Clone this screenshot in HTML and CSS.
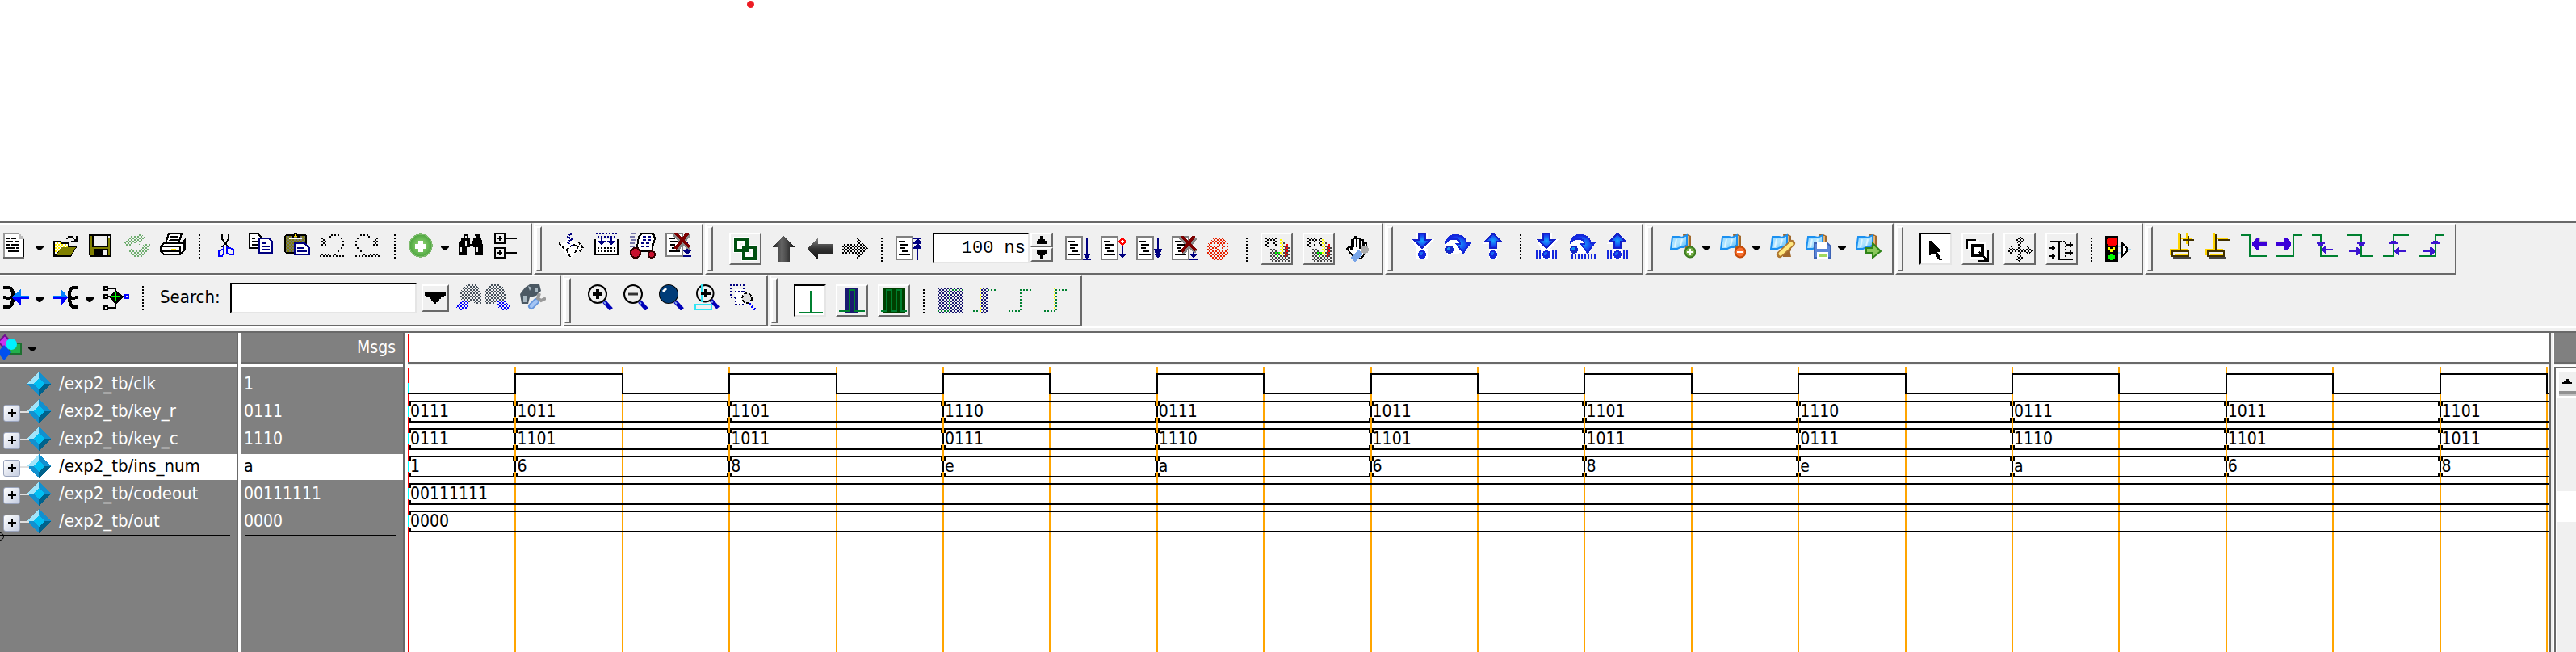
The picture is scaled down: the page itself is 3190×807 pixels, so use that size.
FILE: index.html
```html
<!DOCTYPE html>
<html lang="en">
<head>
<meta charset="utf-8">
<title>Wave</title>
<link rel="stylesheet" href="styles.css">
</head>
<body>
<svg class="defs" aria-hidden="true">
  <defs>
    <pattern id="ck" width="2" height="2" patternUnits="userSpaceOnUse"><path d="M0 0h1v1H0zM1 1h1v1H1z"/></pattern>
    <pattern id="cg" width="2" height="2" patternUnits="userSpaceOnUse"><path fill="#444" d="M0 0h1v1H0zM1 1h1v1H1z"/></pattern>
    <pattern id="cn" width="2" height="2" patternUnits="userSpaceOnUse"><path fill="#191970" d="M0 0h1v1H0zM1 1h1v1H1z"/></pattern>
    <pattern id="cb" width="2" height="2" patternUnits="userSpaceOnUse"><path fill="#00f" d="M0 0h1v1H0zM1 1h1v1H1z"/></pattern>
    <pattern id="cr" width="2" height="2" patternUnits="userSpaceOnUse"><path fill="#e62200" d="M0 0h1v1H0zM1 1h1v1H1z"/></pattern>
    <pattern id="cy" width="2" height="2" patternUnits="userSpaceOnUse"><path fill="#fff" d="M0 0h2v2H0z"/><path fill="#ffef00" d="M0 0h1v1H0zM1 1h1v1H1z"/></pattern>
    <pattern id="co" width="2" height="2" patternUnits="userSpaceOnUse"><path fill="#808000" d="M0 0h2v2H0z"/><path fill="#777" d="M0 0h1v1H0zM1 1h1v1H1z"/></pattern>
    <pattern id="cl" width="2" height="2" patternUnits="userSpaceOnUse"><path fill="#6fae6f" d="M0 0h1v1H0zM1 1h1v1H1z"/></pattern>
    <pattern id="cs" width="2" height="2" patternUnits="userSpaceOnUse"><path fill="#45505a" d="M0 0h1v1H0zM1 1h1v1H1z"/></pattern>
    <radialGradient id="gb"><stop offset="0" stop-color="#18a8ff"/><stop offset="1" stop-color="#1420e8"/></radialGradient>
    <linearGradient id="gd" x2="1"><stop offset="0" stop-color="#222"/><stop offset=".4" stop-color="#666"/><stop offset="1" stop-color="#111"/></linearGradient>
    <linearGradient id="gv" x2="0" y2="1"><stop offset="0" stop-color="#888"/><stop offset=".5" stop-color="#333"/><stop offset="1" stop-color="#111"/></linearGradient>
    <radialGradient id="gg"><stop offset="0" stop-color="#9bdc7c"/><stop offset="1" stop-color="#4da63f"/></radialGradient>
    <linearGradient id="gm" x2="1" y2="1"><stop offset="0" stop-color="#8fd4ff"/><stop offset=".5" stop-color="#b4e6ff"/><stop offset="1" stop-color="#4db4fa"/></linearGradient>
    <symbol id="sheet" viewBox="0 0 16 16"><path fill="#808080" d="M0 0h11v15H0z"/><path fill="#fff" d="M1 1h9v13H1z"/><path d="M2 3h4v1H2zM3 5h5v1H3zM3 7h3v1H3zM4 9h4v1H4zM2 11h7v1H2z"/></symbol>
    <symbol id="cross" viewBox="0 0 16 16"><path fill="none" stroke="#888" stroke-width="2" d="M5 1l10 9M15 1L7 11"/><path fill="none" stroke="#7d0000" stroke-width="2" d="M6 0l9 9M14 0L6 10"/></symbol>
    <symbol id="bdown" viewBox="0 0 16 16"><path fill="#fff" d="M4 0h7v4h4l-5 6h1v6H4v-6L1 4h3z"/><path fill="url(#gb)" stroke="#1420c8" d="M5.500.5h4v4h3L7.500 9.500 2.500 4.500h3z"/><circle cx="7.500" cy="13.500" r="2.500" fill="#1428dc"/><circle cx="7" cy="13" r="1" fill="#1868f0"/></symbol>
    <symbol id="bup" viewBox="0 0 16 16"><path fill="#fff" d="M7 0l6 6h-3v10H5V7H1z"/><path fill="url(#gb)" stroke="#1420c8" d="M7.500.5l5 5h-3v4h-4v-4h-3z"/><circle cx="7.500" cy="13.500" r="2.500" fill="#1428dc"/><circle cx="7" cy="13" r="1" fill="#1868f0"/></symbol>
    <symbol id="bover" viewBox="0 0 16 16"><path fill="#fff" d="M0 6l6-3 4 5 3 4-6 1-6 1z"/><path fill="url(#gb)" stroke="#1428d8" d="M.5 5.500Q2 1.500 6 1.500q6 0 7 5h2l-4 6-4-5.500h2Q9 4 6 4 2.500 3.500.5 6z"/><circle cx="2.500" cy="10.500" r="2.500" fill="#1428c8"/><circle cx="2" cy="10" r="1" fill="#1890f0"/></symbol>
    <symbol id="map" viewBox="0 0 16 16"><path fill="#a0682c" d="M8 1h3l2 1v9l-3 3z"/><path fill="#e2b476" d="M11 2h1v8h-1z"/><path fill="url(#gm)" stroke="#1b90f0" d="M1.500 2.500h4l2 .5 3-1.500v6l-2 1.500h-2l-2 1h-4z"/><path fill="none" stroke="#def4ff" d="M4 4L3 9M7.500 4l-1 4"/></symbol>
    <symbol id="lens" viewBox="0 0 16 16"><circle cx="6" cy="6" r="5.500" fill="#eee" stroke="#000"/><path stroke="#0000b8" stroke-width="2.500" d="M10 10.500l4.500 5"/><path stroke="#8ae" d="M10 11l1 1"/></symbol>
    <symbol id="gem" viewBox="0 0 30 30"><path fill="#1290cf" d="M15 0l15 15-15 15L0 15z"/><path fill="#a0e4fa" d="M15 0v8l-7 7H0z"/><path fill="#00628c" d="M30 15H22l-7 8v7z"/><path fill="#00bff3" d="M15 8l7 7-7 7-7-7z"/></symbol>
  </defs>
</svg>

<div class="canvas"><div class="dot"></div></div>

<header class="toolbars">
  <div class="strip">
    <div class="bar bar-first" role="toolbar" aria-label="Standard">
      <button class="tool" aria-label="New"><svg viewBox="0 0 16 16"><path fill="#999" d="M0 0h10v1H1v14H0z"/><path fill="#fff" d="M1 1h9v3h2v11H1z"/><path fill="#bbb" d="M10 1h1v1h1v1h1v1h-3z"/><path d="M12 4h1v11h-1zM2 3h2v1H2zM5 3h3v1H5zM2 5h4v1H2zM7 5h3v1H7zM2 7h2v1H2zM5 7h5v1H5zM2 9h5v1H2zM8 9h2v1H8zM3 11h7v1H3z"/><path fill="#666" d="M0 15h13v1H0z"/></svg></button>
      <button class="drop" aria-label="New options"></button>
      <button class="tool" aria-label="Open"><svg viewBox="0 0 16 16"><path d="M0 5h5v1h5v2h5l-4 7H0z"/><path fill="url(#cy)" d="M1 6h3l1 1h4v2H5l-3 4H1z"/><path fill="#808000" d="M5 9h9l-3 5H2z"/><path d="M8 3h1V2h3v1h1v1h1V2h1v4h-4V5h2V4h-1V3H9v1H8z"/></svg></button>
      <button class="tool" aria-label="Save"><svg viewBox="0 0 16 16"><path d="M0 1h14v14H1l-1-1z"/><path fill="#808000" d="M1 2h1v7h10V3h1v11H1z"/><path fill="#f0f0f0" d="M3 2h8v6H3zM12 2h1v1h-1z"/><path d="M3 10h9v4H3z"/><path fill="#f0f0f0" d="M9 11h2v3H9z"/></svg></button>
      <button class="tool" aria-label="Reload" disabled><svg viewBox="0 0 16 16"><path fill="url(#cl)" d="M0 6l4-4h5V0l4 3-4 5V6L5 7 2 9zM3 10l5 1 3-1 1-3h4l-1 4-4 4H7v1l-4-4z"/></svg></button>
      <button class="tool" aria-label="Print"><svg viewBox="0 0 16 16"><path fill="#fff" stroke="#000" d="M5.500.5h8l-2 6h-8z"/><path d="M6 2h5v1H6zM6 4h5v1H5z"/><path fill="#fff" stroke="#000" d="M2.500 6.500h11l2-2v6l-3 3h-10l-2-2v-3z"/><path d="M1 8h12v1H1zM12 9h1v4h-1zM14 5h1v6h-1zM1 11h11v1H1z"/><path fill="#ffe000" d="M7 10h3v1H7z"/></svg></button>
      <span class="sep"></span>
      <button class="tool" aria-label="Cut"><svg viewBox="0 0 16 16"><path fill="none" stroke="#000" d="M5.500 1v3l4 5M9.500 1v3l-4 5"/><path fill="none" stroke="#00f" d="M6.500 8.500v4l-1 2h-2v-3l2-1h1M8.500 8.500v4l2 1h2v-3l-2-1h-2"/></svg></button>
      <button class="tool" aria-label="Copy"><svg viewBox="0 0 16 16"><path fill="#fff" stroke="#000" d="M.5.5h5l2 2v7h-7z"/><path d="M2 3h2v1H2zM2 5h4v1H2zM2 7h4v1H2z"/><path fill="#fff" stroke="#000080" d="M6.500 3.500h6l2 2v7h-8z"/><path fill="#000080" d="M8 6h3v1H8zM8 8h5v1H8zM8 10h5v1H8z"/></svg></button>
      <button class="tool" aria-label="Paste"><svg viewBox="0 0 16 16"><path d="M1 1h12l1 1v10l-1 1H1l-1-1V2z"/><path fill="url(#co)" d="M1 2h12v10H1z"/><path fill="#fff" d="M3 3h8v1H3z"/><path fill="#ffe000" stroke="#000" d="M4.500 2.500h1l1-2h1l1 2h1"/><path fill="#fff" stroke="#000080" d="M6.500 6.500h6l3 3v4h-9z"/><path fill="#000080" d="M8 9h4v1H8zM8 11h6v1H8z"/></svg></button>
      <button class="tool" aria-label="Undo" disabled><svg viewBox="0 0 16 16"><path d="M1 3h1v1H1zM2 4h1v1H2zM1 5h1v1H1zM3 5h1v1H3zM2 6h1v1H2zM1 7h1v1H1zM3 7h1v1H3zM6 2h1v1H6zM7 1h1v1H7zM9 1h1v1H9zM11 1h1v1h-1zM13 3h1v1h-1zM14 5h1v1h-1zM14 7h1v1h-1zM13 9h1v1h-1zM11 11h1v1h-1zM0 14h1v1H0zM1 13h1v1H1zM2 14h1v1H2zM3 13h1v1H3zM4 14h1v1H4zM5 13h1v1H5zM6 14h1v1H6zM8 14h1v1H8zM9 13h1v1H9zM10 14h1v1h-1zM12 14h1v1h-1zM14 14h1v1h-1z"/></svg></button>
      <button class="tool" aria-label="Redo" disabled><svg viewBox="0 0 16 16"><path transform="matrix(-1 0 0 1 15 0)" d="M1 3h1v1H1zM2 4h1v1H2zM1 5h1v1H1zM3 5h1v1H3zM2 6h1v1H2zM1 7h1v1H1zM3 7h1v1H3zM6 2h1v1H6zM7 1h1v1H7zM9 1h1v1H9zM11 1h1v1h-1zM13 3h1v1h-1zM14 5h1v1h-1zM14 7h1v1h-1zM13 9h1v1h-1zM11 11h1v1h-1zM0 14h1v1H0zM1 13h1v1H1zM2 14h1v1H2zM3 13h1v1H3zM4 14h1v1H4zM5 13h1v1H5zM6 14h1v1H6zM8 14h1v1H8zM9 13h1v1H9zM10 14h1v1h-1zM12 14h1v1h-1zM14 14h1v1h-1z"/></svg></button>
      <span class="sep"></span>
      <button class="tool" aria-label="Add"><svg viewBox="0 0 16 16"><circle cx="7.500" cy="8" r="7" fill="url(#gg)" stroke="#7cba6c" stroke-width=".7"/><path fill="#fff" d="M6 5h3v2h2v3H9v2H6v-2H4V7h2z"/></svg></button>
      <button class="drop" aria-label="Add options"></button>
      <button class="tool" aria-label="Find"><svg viewBox="0 0 16 16"><path d="M3 1h3v2h1v2h2V3h1V1h3v2h1l1 5v6h-5V9H9V8H7v1H5v5H0V8l2-5h1z"/><path fill="#eee" d="M4 2h1v1H4zM10 2h1v1h-1zM1 9h1v3H1zM4 5h1v3H4zM7 5h1v2H7zM11 9h1v3h-1z"/></svg></button>
      <button class="tool" aria-label="Collapse tree"><svg viewBox="0 0 16 16"><path fill="none" stroke="#000" d="M.5.5h6v6h-6zM.5 9.500h6v6h-6zM2 3.500h3M3.500 2v3M2 12.500h3M3.500 11v3M7 3.500h7M7 12.500h7"/></svg></button>
    </div>
    <div class="bar" role="toolbar" aria-label="Compile">
      <span class="grip"></span>
      <button class="tool" aria-label="Compile"><svg viewBox="0 0 16 16"><path fill="#fff" d="M7 3l8 6-8 7-7-8z"/><path fill="none" stroke="#000" stroke-dasharray="2 1" d="M0 6.500l3 3 2 1 2-2M5 11l2 4M9 7.500l3 1-2 4M12 5.500l3 4-3 3"/><path fill="none" stroke="#000080" d="M8 .5L5.500 2.500 8 4 5.500 6 9 8.500" stroke-dasharray="2 1"/></svg></button>
      <button class="tool" aria-label="Compile all"><svg viewBox="0 0 16 16"><path fill="#fff" stroke="#000" d="M.5 4v9.500h14V4"/><path stroke="#000" stroke-dasharray="1 1" d="M2 9.500h12M2 11.500h12"/><path fill="#000080" d="M2 5h5L4.500 8zM8 5h5l-2.500 3zM4 3h1v3H4zM10 3h1v3h-1z"/><path fill="none" stroke="#000080" stroke-dasharray="1 1" d="M1 .5h13M2 2.500h12"/></svg></button>
      <button class="tool" aria-label="Simulate"><svg viewBox="0 0 16 16"><path fill="#fff" stroke="#000" d="M7.500.5h7l1 3-2 8h-8l-1-3 1-6z"/><path stroke="#000080" stroke-dasharray="2 1" d="M8 2.500h5M8 4.500h5M7 6.500h5M7 8.500h5"/><path stroke="#77a" stroke-dasharray="3 1" d="M1 .5h4M0 2.500h4M1 4.500h3M0 6.500h4M0 8.500h3"/><circle cx="3.500" cy="12.500" r="3" fill="#c8102e" stroke="#300"/><circle cx="13.500" cy="13.500" r="2" fill="#c8102e" stroke="#300"/></svg></button>
      <button class="tool" aria-label="End simulation"><svg viewBox="0 0 16 16"><use href="#sheet" width="16" height="16"/><path fill="#000080" d="M13 6h1v5h2l-2.500 3L11 11h2zM11 14h5v1h-5z"/><use href="#cross" width="16" height="16"/></svg></button>
    </div>
    <div class="bar bar-framed bar-run" role="toolbar" aria-label="Simulate">
      <span class="grip"></span>
      <button class="framed" aria-label="Environment"><svg viewBox="0 0 16 16"><path fill="none" stroke="#fff" stroke-width="4" d="M2.500 2.500h6v6h-6zM7.500 7.500h6v6h-6z"/><path fill="none" stroke="#004f10" stroke-width="2" d="M2 2h7v7H2zM7 7h7v7H7z"/></svg></button>
      <button class="tool" aria-label="Up"><svg viewBox="0 0 16 16"><path fill="url(#gd)" d="M7.500 0L15 7h-3.500v9h-7V7H1z"/></svg></button>
      <button class="tool" aria-label="Back"><svg viewBox="0 0 16 16"><path fill="url(#gv)" d="M0 8l7-7v4h9v6H7v4z"/></svg></button>
      <button class="tool" aria-label="Forward" disabled><svg viewBox="0 0 16 16"><path fill="url(#ck)" d="M16 8L9 1v4H0v6h9v4z"/></svg></button>
      <span class="sep"></span>
      <button class="tool" aria-label="Restart"><svg viewBox="0 0 16 16"><use href="#sheet" width="16" height="16"/><path fill="#000080" d="M11 1h5v1h-2l2 2v1h-2l2 2v1h-2v7h-1V8h-2V7l2-2h-2V4l2-2h-2z"/></svg></button>
      <input class="runtime" type="text" value="100 ns" aria-label="Run length">
      <span class="spinner"><button aria-label="Increase"><svg viewBox="0 0 6 5"><path d="M2 0h2v2h1v1h1v2H0V3h1V2h1z"/></svg></button><button aria-label="Decrease"><svg viewBox="0 0 6 5"><path d="M0 0h6v2H5v1H4v2H2V3H1V2H0z"/></svg></button></span>
      <button class="tool run" aria-label="Run"><svg viewBox="0 0 16 16"><use href="#sheet" width="16" height="16"/><path fill="#000080" d="M13 1h1v10h2l-2 3h2v1h-5v-1h2l-2-3h2z"/></svg></button>
      <button class="tool" aria-label="Continue run"><svg viewBox="0 0 16 16"><use href="#sheet" width="16" height="16"/><path fill="#fff" stroke="#f00" d="M13.500 1.500l2 2-2 2-2-2z"/><path fill="#000080" d="M13 6h1v5h2l-2.500 3L11 11h2z"/></svg></button>
      <button class="tool" aria-label="Run all"><svg viewBox="0 0 16 16"><use href="#sheet" width="16" height="16"/><path fill="#000080" d="M13 1h1v7h2l-1 3h1l-2.500 3L11 11h1l-1-3h2z"/></svg></button>
      <button class="tool" aria-label="Break"><svg viewBox="0 0 16 16"><use href="#sheet" width="16" height="16"/><path fill="#000080" d="M13 6h1v5h2l-2.500 3L11 11h2zM11 14h5v1h-5z"/><use href="#cross" width="16" height="16"/></svg></button>
      <button class="tool" aria-label="Stop" disabled><svg viewBox="0 0 16 16"><path fill="url(#cr)" d="M4 1h5l4 4v6l-4 4H4l-4-4V5z"/><path fill="#f0f0f0" d="M3 5h3v1H3zM7 6h2v2h2V5h1v4H7zM3 8h3v1H3z"/></svg></button>
      <span class="sep"></span>
      <button class="framed" aria-label="Performance profile" disabled><svg viewBox="0 0 16 16"><path fill="url(#ck)" d="M1 1h7v5H6V3H3v4H1z"/><path fill="url(#cg)" d="M4 8h4v2h3V3h2v3h3v10H4z"/><path stroke="#ff0" stroke-dasharray="1 1" d="M11.500 3v10M10.500 2v10"/><path stroke="#f00" stroke-dasharray="1 1" d="M14.500 5v8M13.500 6v8"/><path stroke="#0f0" stroke-dasharray="1 1" d="M7 10.500h3M8 12.500h2"/></svg></button>
      <button class="framed" aria-label="Memory profile" disabled><svg viewBox="0 0 16 16"><path fill="url(#ck)" d="M1 1h4l2 1 3-1v5H8V3H6v3H5V3H3v4H1z"/><path fill="url(#cg)" d="M4 8h4v2h3V3h2v3h3v10H4z"/><path stroke="#ff0" stroke-dasharray="1 1" d="M11.500 3v10M10.500 2v10"/><path stroke="#f00" stroke-dasharray="1 1" d="M14.500 5v8M13.500 6v8"/><path stroke="#0f0" stroke-dasharray="1 1" d="M7 10.500h3M8 12.500h2"/></svg></button>
      <button class="tool" aria-label="Edit profile"><svg viewBox="0 0 16 16"><path fill="#fff" stroke="#000" d="M4.500 8V2.500h1V7V1.500h1V.5h1V7 1.500h2V8 2.500h2V7l1-3h1v5l-3 5h-4l-5-6 1-1h1l1 2z"/><path stroke="#79a5e8" stroke-width="4" d="M5 15l5-5"/><circle cx="12.500" cy="8.500" r="2.500" fill="#aaa"/></svg></button>
    </div>
    <div class="bar" role="toolbar" aria-label="Step">
      <span class="grip"></span>
      <button class="tool" aria-label="Step into"><svg viewBox="0 0 16 16"><use href="#bdown" width="16" height="16"/></svg></button>
      <button class="tool" aria-label="Step over"><svg viewBox="0 0 16 16"><use href="#bover" width="16" height="16"/></svg></button>
      <button class="tool" aria-label="Step out"><svg viewBox="0 0 16 16"><use href="#bup" width="16" height="16"/></svg></button>
      <span class="sep"></span>
      <button class="tool" aria-label="Step into current"><svg viewBox="0 0 16 16"><use href="#bdown" width="16" height="16"/><path fill="#1428dc" d="M1 11h1v5H1zM3 11h1v5H3zM11 11h1v5h-1zM13 11h1v5h-1z"/></svg></button>
      <button class="tool" aria-label="Step over current"><svg viewBox="0 0 16 16"><use href="#bover" width="16" height="16"/><path stroke="#1428dc" stroke-width="3" stroke-dasharray="1 1" d="M1 14.500h15"/></svg></button>
      <button class="tool" aria-label="Step out current"><svg viewBox="0 0 16 16"><use href="#bup" width="16" height="16"/><path fill="#1428dc" d="M1 11h1v5H1zM3 11h1v5H3zM11 11h1v5h-1zM13 11h1v5h-1z"/></svg></button>
    </div>
    <div class="bar" role="toolbar" aria-label="Bookmarks">
      <span class="grip"></span>
      <button class="tool smooth" aria-label="Add bookmark"><svg viewBox="0 0 16 16"><use href="#map" width="16" height="16"/><circle cx="12.500" cy="12" r="3.200" fill="#78b048" stroke="#3c7c20"/><path stroke="#fff" d="M10.500 12h4M12.500 10v4"/></svg></button>
      <button class="drop" aria-label="Add bookmark options"></button>
      <button class="tool smooth" aria-label="Delete bookmark"><svg viewBox="0 0 16 16"><use href="#map" width="16" height="16"/><circle cx="12.500" cy="12" r="3.200" fill="#fb7030" stroke="#c44a08"/><path stroke="#fff" d="M10.500 12h4"/></svg></button>
      <button class="drop" aria-label="Delete bookmark options"></button>
      <button class="tool smooth" aria-label="Edit bookmark"><svg viewBox="0 0 16 16"><use href="#map" width="16" height="16"/><path fill="#a0682c" d="M8 13l4-3 1 5H8z"/><path stroke="#b07830" stroke-width="4" stroke-linecap="round" d="M6 13.500l7.500-7"/><path stroke="#ffe880" stroke-width="2.500" stroke-linecap="round" d="M6.500 13l6.500-6"/></svg></button>
      <button class="tool smooth" aria-label="Save bookmark"><svg viewBox="0 0 16 16"><use href="#map" width="16" height="16"/><path fill="#5b86d8" stroke="#3c62b4" d="M5.500 6.500h8l2 2v7h-10z"/><path fill="#fff" d="M7 6h6v4H7zM7 12h7v4H7z"/><path fill="#a0d860" d="M8 13h5v2H8z"/></svg></button>
      <button class="drop" aria-label="Save bookmark options"></button>
      <button class="tool smooth" aria-label="Go to bookmark"><svg viewBox="0 0 16 16"><use href="#map" width="16" height="16"/><path fill="#8ac85c" stroke="#2f8418" d="M6.500 9.500h4v-3l5 5-5 4v-3h-4z"/></svg></button>
    </div>
    <div class="bar bar-framed" role="toolbar" aria-label="Mode">
      <span class="grip"></span>
      <button class="framed pressed" aria-label="Select mode"><svg viewBox="0 0 16 16"><path d="M4 3h1l6 6v1H9l3 5h-2L7.500 11 4 12z"/></svg></button>
      <button class="framed" aria-label="Zoom mode"><svg viewBox="0 0 16 16"><path fill="none" stroke="#fff" stroke-width="2" d="M2.500 9V3.500H9"/><path fill="none" stroke="#000" d="M1.500 8V2.500H7"/><path fill="#fff" d="M3 4h10v10H3z"/><path fill="none" stroke="#000" stroke-width="2" d="M5 6h6v6H5z"/><path fill="none" stroke="#000" d="M9 10l5 5M8 15.500h6.500V9M12 14.500h2V12"/></svg></button>
      <button class="framed" aria-label="Pan mode"><svg viewBox="0 0 16 16"><path fill="url(#ck)" d="M8 0l3 3-2 2v3h3l1-2 3 3-3 3-1-2H9v2l2 2-3 2-3-2 2-2v-2H4l-1 2-3-3 3-3 1 2h3V5L5 3z"/></svg></button>
      <button class="framed" aria-label="Edit mode"><svg viewBox="0 0 16 16"><path fill="none" stroke="#000" d="M1 3.500h5.500v11H15M0 7.500h4M2.500 6v3M0 12.500h4M2.500 11v3M11 5.500h4M13.500 4v3M11 10.500h4M13.500 9v3"/><path fill="none" stroke="#000" stroke-dasharray="1 1" d="M7 3.500h3.500v11"/></svg></button>
      <span class="sep"></span>
      <button class="tool" aria-label="Stop drawing"><svg viewBox="0 0 16 16"><path d="M0 0h8v16H0z"/><path fill="red" d="M2 1h4l1 1v3L6 6H2L1 5V2z"/><path fill="#ff0" d="M2 7h1v1h2V7h1v2H5v1H3V9H2z"/><path fill="#0f0" d="M3 11h2v1h1v2H5v1H3v-1H2v-2h1z"/><path stroke="#9cd4ee" d="M8 6.500h3M8 10.500h3M14 8.500h2"/><path fill="#fff" stroke="#000" d="M10.500 4.500l3 3v2l-3 3z"/></svg></button>
    </div>
    <div class="bar" role="toolbar" aria-label="Cursor">
      <span class="grip"></span>
      <button class="tool" aria-label="Insert cursor"><svg viewBox="0 0 16 16"><path fill="#ffd400" d="M5 0h1v10H5zM0 10h11v1H0zM0 10h1v4H0zM7 3h7v1H7zM10 0h1v7h-1z"/><path fill="#403000" d="M6 1h1v10H6zM1 11h11v4H1zM8 4h7v1H8zM11 2h1v6h-1z"/><path fill="#f0f0f0" d="M2 12h9v2H2z"/><path fill="#ffd400" d="M3 13h8v1H3z"/><path fill="#444" d="M2 15h11v1H2z"/></svg></button>
      <button class="tool" aria-label="Delete cursor"><svg viewBox="0 0 16 16"><path fill="#ffd400" d="M5 0h1v10H5zM0 10h11v1H0zM0 10h1v4H0zM7 3h7v1H7z"/><path fill="#403000" d="M6 1h1v10H6zM1 11h11v4H1zM8 4h7v1H8z"/><path fill="#f0f0f0" d="M2 12h9v2H2z"/><path fill="#ffd400" d="M3 13h8v1H3z"/><path fill="#444" d="M2 15h11v1H2z"/></svg></button>
      <button class="tool" aria-label="Previous transition"><svg viewBox="0 0 16 16"><path fill="none" stroke="#008030" d="M0 1.500h5.500v13H16"/><path fill="#bbb" d="M9 3h3v2h4v1H9z"/><path fill="#3c00d8" d="M10 3h1v3h5v2h-5v3h-1l-3-3V6z"/></svg></button>
      <button class="tool" aria-label="Next transition"><svg viewBox="0 0 16 16"><path fill="none" stroke="#008030" d="M16 1.500h-5.500v13H0"/><path fill="#3c00d8" d="M6 3H5v3H0v2h5v3h1l3-3V6z"/></svg></button>
      <button class="tool" aria-label="Previous falling edge"><svg viewBox="0 0 16 16"><path fill="none" stroke="#008030" d="M0 1.500h5.500v13H16"/><path fill="#3c14d0" d="M3 6h5v1H7v1H4V7H3zM6 10l2-2h1v2h4v1H9v2H8l-2-2z"/></svg></button>
      <button class="tool" aria-label="Next falling edge"><svg viewBox="0 0 16 16"><path fill="none" stroke="#008030" d="M0 1.500h8.500v13H16"/><path fill="#3c14d0" d="M6 6h5v1h-1v1H7V7H6zM8 11L6 9H5v2H1v1h4v2h1l2-2z"/></svg></button>
      <button class="tool" aria-label="Previous rising edge"><svg viewBox="0 0 16 16"><path fill="none" stroke="#008030" d="M16 1.500H6.500v13H0"/><path fill="#3c14d0" d="M4 7V6h1V5h3v1h1v1zM7 11l2-2h1v2h4v1h-4v2H9l-2-2z"/></svg></button>
      <button class="tool" aria-label="Next rising edge"><svg viewBox="0 0 16 16"><path fill="none" stroke="#008030" d="M16 1.500h-5.500v13H0"/><path fill="#3c14d0" d="M8 7V6h1V5h3v1h1v1zM10 11L8 9H7v2H3v1h4v2h1l2-2z"/></svg></button>
    </div>
  </div>
  <div class="strip">
    <div class="bar bar-first bar-search" role="toolbar" aria-label="Search">
      <button class="tool" aria-label="Drivers"><svg viewBox="0 0 16 16"><path fill="none" stroke="#000" stroke-width="2" d="M0 2h3q3 0 3 4v1q0 2-6 1M6 8q0 6-3 6H0"/><path fill="#0080ff" d="M5 8l6-5v4h5v1z"/><path fill="#00f" d="M5 8h11v1h-5v4z"/></svg></button>
      <button class="drop" aria-label="Driver options"></button>
      <button class="tool" aria-label="Readers"><svg viewBox="0 0 16 16"><path fill="none" stroke="#000" stroke-width="2" d="M15 2h-2q-3 0-3 4v1q0 2 5 1M10 8q0 6 3 6h2"/><path fill="#0080ff" d="M9 8L5 3v4H0v1z"/><path fill="#00f" d="M9 8H0v1h5v4z"/></svg></button>
      <button class="drop" aria-label="Reader options"></button>
      <button class="tool" aria-label="Trace"><svg viewBox="0 0 16 16"><path fill="none" stroke="#000" d="M.5 1.500h2v2h-2zM.5 6.500h2v2h-2zM.5 13.500h2v2h-2zM3 2.500h4.500v12H3M3 7.500h10"/><path d="M7 4h1l4 3v1l-4 4H7L4 8V7z"/><path fill="#0f0" d="M7 5h1v2h2v1H8v2H7V8H5V7h2z"/><path fill="none" stroke="#00f" d="M13.500 6.500h2v2h-2z"/></svg></button>
      <span class="sep"></span>
      <label class="caption" for="find">Search:</label>
      <input class="find" id="find" type="text">
      <button class="combo" aria-label="Search history"><svg viewBox="0 0 13 7"><path d="M0 0h13v2h-1v1h-2v1H9v1H8v1H7v1H6V6H5V5H4V4H3V3H1V2H0z"/></svg></button>
      <button class="tool" aria-label="Find previous" disabled><svg viewBox="0 0 16 16"><path fill="url(#cs)" d="M3 4l4-4h5l2 2 2 4v6h-4l-1-2H9v2H6L3 9z"/><path fill="url(#cb)" d="M0 14l4-4h4v4l-3 2H2z"/></svg></button>
      <button class="tool find-next" aria-label="Find next" disabled><svg viewBox="0 0 16 16"><path fill="url(#cs)" d="M0 4l4-4h5l2 1 2 5v5h-3l-2-1-2 2H0z"/><path fill="url(#cb)" d="M8 10h4l4 4-2 2h-3l-3-2z"/></svg></button>
      <button class="tool smooth" aria-label="Search options"><svg viewBox="0 0 16 16"><path fill="#4b5863" d="M0 6l3-4 3-2h6l1 4-3 3-4 1-1 4H1z"/><path fill="#a9b8c2" d="M2 7h2v4H2zM5 1l2 1-1 2zM9 2h2v3H9z"/><path stroke="#6897dc" stroke-width="4" stroke-linecap="round" d="M7 13.500l3-3"/><path stroke="#a5c5f4" stroke-width="2" stroke-linecap="round" d="M7 13.500l3-3"/><path fill="none" stroke="#999" stroke-width="2" d="M12 5.500l-1 3 2 1.500 3-1.500"/></svg></button>
    </div>
    <div class="bar" role="toolbar" aria-label="Zoom">
      <span class="grip"></span>
      <button class="tool smooth" aria-label="Zoom in"><svg viewBox="0 0 16 16"><use href="#lens" width="16" height="16"/><path stroke="#000" stroke-width="2" d="M3 6h6M6 3v6"/></svg></button>
      <button class="tool smooth" aria-label="Zoom out"><svg viewBox="0 0 16 16"><use href="#lens" width="16" height="16"/><path stroke="#333" stroke-width="1.500" d="M3 6h6"/></svg></button>
      <button class="tool smooth" aria-label="Zoom full"><svg viewBox="0 0 16 16"><use href="#lens" width="16" height="16"/><circle cx="6" cy="6" r="5.500" fill="#003c78"/><path stroke="#fff" stroke-width="1.500" d="M2.500 4.500l2-2"/></svg></button>
      <button class="tool smooth" aria-label="Zoom on cursor"><svg viewBox="0 0 16 16"><path fill="none" stroke="#30e4f4" d="M.5 12.500h10v3H.5z"/><use href="#lens" x="1" width="15" height="15"/><path stroke="#30e4f4" d="M4.500 0v11"/><path stroke="#000" stroke-width="2" d="M4 5.500h6M7 3v5"/></svg></button>
      <button class="tool" aria-label="Zoom mode area"><svg viewBox="0 0 16 16"><path fill="#fff" d="M3 3h6v10H3z"/><path fill="none" stroke="#000080" stroke-dasharray="1 1" d="M0 .5h8.500v4M.5 0v8h3M3.500 12.500h5M3.500 8v5M3 4.500h6"/><circle cx="10.500" cy="8.500" r="3" fill="#ddd" stroke="#000" stroke-dasharray="2 1"/><path stroke="#00f" stroke-width="2" stroke-dasharray="1 1" d="M12 12l4 4"/></svg></button>
    </div>
    <div class="bar bar-framed" role="toolbar" aria-label="Compare">
      <span class="grip"></span>
      <button class="framed pressed" aria-label="Expand off"><svg viewBox="0 0 16 16"><path fill="none" stroke="#008030" d="M8.500 2v13M1 15.500h16"/></svg></button>
      <button class="framed" aria-label="Expand deltas"><svg viewBox="0 0 16 16"><path fill="#191970" d="M4 0h8v16H4z"/><path fill="none" stroke="#008030" d="M0 14.500h6.500v-13h3v13H16"/></svg></button>
      <button class="framed" aria-label="Expand events"><svg viewBox="0 0 16 16"><path fill="#004000" d="M1 0h14v16H1z"/><path fill="none" stroke="#008030" d="M0 14.500h3.500v-13h3v13h3v-13h3v13H16"/></svg></button>
      <span class="sep"></span>
      <button class="tool" aria-label="Expand all" disabled><svg viewBox="0 0 16 16"><path fill="url(#cn)" d="M0 0h16v16H0z"/><path fill="none" stroke="#008030" stroke-dasharray="1 1" d="M0 14.500h7.500v-13H16"/></svg></button>
      <button class="tool" aria-label="Expand at cursor" disabled><svg viewBox="0 0 16 16"><path fill="url(#cn)" d="M5 0h4v16H5z"/><path stroke="#ff0" stroke-dasharray="1 1" d="M4.500 0v15"/><path fill="none" stroke="#008030" stroke-dasharray="1 1" d="M0 14.500h4M9 1.500h6"/></svg></button>
      <button class="tool" aria-label="Collapse all" disabled><svg viewBox="0 0 16 16"><path fill="none" stroke="#008030" stroke-dasharray="1 1" d="M0 14.500h7.500v-13H15"/></svg></button>
      <button class="tool" aria-label="Collapse at cursor" disabled><svg viewBox="0 0 16 16"><path stroke="#ff0" stroke-dasharray="1 1" d="M6.500 0v15"/><path fill="none" stroke="#008030" stroke-dasharray="1 1" d="M0 14.500h7.500v-13H15"/></svg></button>
    </div>
  </div>
</header>

<main class="wave">
  <section class="pane names">
    <div class="head"><svg class="logo" viewBox="0 0 28 32" aria-hidden="true"><path fill="#22b14c" stroke="#1c7030" stroke-width="2" d="M12 11h14v13H12z"/><path fill="#c832f0" stroke="#701090" stroke-width="2" d="M-2 9l8-8 8 9-8 8z"/><path fill="#0050f0" d="M5 13l9 9-9 10-8-10z"/><circle cx="14" cy="12" r="7" fill="#00f0ff"/></svg><button class="drop" aria-label="Window options"></button></div>
    <ul class="rows">
      <li><span class="leaf"></span><svg class="gem"><use href="#gem"/></svg>/exp2_tb/clk</li>
      <li><button class="expand" aria-label="Expand key_r"></button><svg class="gem"><use href="#gem"/></svg>/exp2_tb/key_r</li>
      <li><button class="expand" aria-label="Expand key_c"></button><svg class="gem"><use href="#gem"/></svg>/exp2_tb/key_c</li>
      <li class="selected"><button class="expand" aria-label="Expand ins_num"></button><svg class="gem"><use href="#gem"/></svg>/exp2_tb/ins_num</li>
      <li><button class="expand" aria-label="Expand codeout"></button><svg class="gem"><use href="#gem"/></svg>/exp2_tb/codeout</li>
      <li><button class="expand" aria-label="Expand out"></button><svg class="gem"><use href="#gem"/></svg>/exp2_tb/out</li>
    </ul>
    <div class="rule knob"></div>
  </section>
  <section class="pane values">
    <div class="head">Msgs</div>
    <ul class="rows">
      <li>1</li>
      <li>0111</li>
      <li>1110</li>
      <li class="selected">a</li>
      <li>00111111</li>
      <li>0000</li>
    </ul>
    <div class="rule"></div>
  </section>
  <section class="plot">
    <div class="ruler"></div>
    <div class="traces">
      <div class="track grid" aria-hidden="true"><i></i><i></i><i></i><i></i><i></i><i></i><i></i><i></i><i></i><i></i><i></i><i></i><i></i><i></i><i></i><i></i><i></i><i></i><i></i><i></i><i></i></div>
      <div class="track clock"><i></i><i></i><i></i><i></i><i></i><i></i><i></i><i></i><i></i><i></i><i></i><i></i><i></i><i></i><i></i><i></i><i></i><i></i><i></i><i></i><i></i></div>
      <div class="track bus"><b>0111</b><b>1011</b><b>1101</b><b>1110</b><b>0111</b><b>1011</b><b>1101</b><b>1110</b><b>0111</b><b>1011</b><b>1101</b></div>
      <div class="track bus"><b>0111</b><b>1101</b><b>1011</b><b>0111</b><b>1110</b><b>1101</b><b>1011</b><b>0111</b><b>1110</b><b>1101</b><b>1011</b></div>
      <div class="track bus"><b>1</b><b>6</b><b>8</b><b>e</b><b>a</b><b>6</b><b>8</b><b>e</b><b>a</b><b>6</b><b>8</b></div>
      <div class="track bus"><b class="whole">00111111</b></div>
      <div class="track bus"><b class="whole">0000</b></div>
    </div>
  </section>
  <aside class="side">
    <div class="corner"></div>
    <div class="scroll">
      <button class="up" aria-label="Scroll up"><svg viewBox="0 0 6 3"><path d="M2 0h2v1h1v1h1v1H0V2h1V1h1z"/></svg></button>
      <div class="trough"></div>
      <div class="thumb"></div>
      <div class="trough rest"></div>
    </div>
  </aside>
</main>
</body>
</html>
```
FILE: styles.css
```css
:root {
  --face: #f0f0f0;
  --shade: #696969;
  --panel: #808080;
  --orange: #ffa500;
  --ui: "DejaVu Sans Condensed", "DejaVu Sans", sans-serif;
}
* { box-sizing: border-box; }
body {
  margin: 0;
  min-height: 100vh;
  display: flex;
  flex-direction: column;
  background: #fff;
  color: #000;
  font: 21px/32px var(--ui);
  overflow: hidden;
}
button, input { margin: 0; padding: 0; border: 0; border-radius: 0; background: none; font: inherit; color: #000; }
svg { display: block; shape-rendering: crispEdges; }
.defs { position: absolute; width: 0; height: 0; }
.smooth svg { shape-rendering: auto; }

.canvas { height: 273px; }
.dot { width: 9px; height: 9px; margin: 1px 0 0 29%; border-radius: 50%; background: #ed1c24; }

/* toolbars */
.toolbars { background: var(--face); border-top: 1px solid #93a9bd; border-bottom: 2px solid #fff; }
.strip { display: flex; gap: 2px; }
.strip:first-child { border-top: 2px solid var(--shade); }
.bar {
  display: flex;
  align-items: flex-start;
  gap: 12px;
  height: 64px;
  padding: 10px 13px 0 0;
  border: 2px solid;
  border-color: #fff var(--shade) var(--shade) #fff;
}
.bar-first { border-left: 0; padding-left: 4px; }
.bar-search { padding-right: 17px; }
.bar-run { padding-right: 14px; }
.grip {
  width: 8px;
  height: 56px;
  margin: -8px 9px 0 0;
  border: 2px solid;
  border-color: #fff var(--shade) var(--shade) #fff;
}
.tool { flex: none; width: 32px; height: 32px; }
.tool svg, .framed svg { width: 32px; height: 32px; }
.drop {
  width: 10px;
  height: 6px;
  margin: 16px 0 0 -4px;
  background: #000;
  clip-path: polygon(0 0, 100% 0, 100% 33%, 60% 100%, 40% 100%, 0 33%);
}
.sep { width: 10px; height: 30px; margin-top: 2px; background: repeating-linear-gradient(#000 0 2px, transparent 2px 4px) 4px 0 / 2px 100% no-repeat; }
.bar-framed .grip { margin-right: 8px; }
.bar-framed .tool { height: 40px; padding: 4px 0; }
.bar-framed .sep { margin-top: 6px; }
.framed {
  flex: none;
  width: 40px;
  height: 40px;
  padding: 2px;
  border: 2px solid;
  border-color: #fff var(--shade) var(--shade) #fff;
}
.pressed { background: #fff; border-color: #000 #e5e5e5 #e5e5e5 #000; }
.runtime, .find { border: 2px solid; border-color: #000 #e5e5e5 #e5e5e5 #000; background: #fff; }
.runtime { width: 120px; height: 38px; margin-left: 2px; padding: 0 3px; text-align: right; font: 22px "Liberation Mono", monospace; }
.spinner { width: 28px; margin-left: -11px; display: grid; }
.spinner button { height: 18px; display: grid; place-items: center; border: 2px solid; border-color: #fff var(--shade) var(--shade) #fff; }
.spinner svg { width: 12px; height: 10px; }
.run { margin-left: 3px; }
.caption { flex: 0 0 73px; height: 32px; margin-left: 4px; font-size: 22px; white-space: nowrap; }
.find { width: 231px; height: 38px; margin-top: -2px; }
.combo { width: 34px; height: 34px; margin-left: -6px; display: grid; place-items: center; border: 2px solid; border-color: #fff var(--shade) var(--shade) #fff; }
.combo svg { width: 26px; height: 14px; }
.combo + .tool { margin-left: -4px; }
.find-next { margin-left: -8px; }

/* wave window */
.wave { flex: 1; display: flex; margin-top: 4px; border-top: 2px solid var(--shade); box-shadow: 0 -4px var(--face); background: #fff; }
.pane { display: flex; flex-direction: column; background: #fff; border-right: 2px solid var(--shade); color: #fff; }
.pane::after { content: ""; flex: 1; background: var(--panel); }
.names { flex: 0 0 295px; margin-right: 4px; font-size: 22px; }
.values { flex: 0 0 202px; margin-right: 4px; }
.head { display: flex; align-items: center; height: 38px; background: var(--panel); border-bottom: 2px solid var(--shade); margin-bottom: 4px; }
.values .head { justify-content: flex-end; padding-right: 9px; }
.logo { width: 28px; height: 32px; shape-rendering: auto; }
.names .drop { margin: 4px 0 0 7px; }
.rows { list-style: none; margin: 0; padding: 6px 0 0; background: var(--panel); }
.rows li { display: flex; align-items: center; height: 34px; padding-bottom: 4px; }
.rows li:last-child { height: 32px; padding-bottom: 2px; }
.rows .selected { background: linear-gradient(#fff 32px, var(--panel) 32px); color: #000; }
.values li { padding-left: 3px; }
.gem { width: 30px; height: 30px; margin-right: 10px; }
.leaf { width: 33px; }
.expand {
  position: relative;
  width: 21px;
  height: 21px;
  margin: 4px 8px 0 4px;
  border: 1px solid #9aa4bc;
  border-radius: 3px;
  background:
    linear-gradient(#000, #000) center / 10px 2px no-repeat,
    linear-gradient(#000, #000) center / 2px 10px no-repeat,
    linear-gradient(135deg, #fff, #c4cce0);
}
.expand::after { content: ""; position: absolute; left: 20px; top: 7px; width: 11px; height: 2px; background: #e0e0e0; }
.rule { height: 2px; border-right: 8px solid var(--panel); background: #000; }
.values .rule { border-left: 4px solid var(--panel); }
.knob { position: relative; }
.knob::before { content: ""; position: absolute; left: -5px; top: -3px; width: 8px; height: 8px; border: 1px solid #000; border-radius: 50%; clip-path: inset(0 0 0 5px); }

.plot { flex: 1; min-width: 0; display: flex; flex-direction: column; border-right: 2px solid var(--shade); }
.ruler { height: 38px; border-bottom: 2px solid var(--shade); background: linear-gradient(red, red) 0 2px / 2px 100% no-repeat; }
.traces { position: relative; flex: 1; margin-top: 2px; padding-top: 8px; box-shadow: 0 -2px var(--face); }
.track { position: relative; display: grid; grid-template-columns: repeat(20, minmax(0, 1fr)) 4px; height: 26px; margin: 2px 0 8px; }
.grid { position: absolute; inset: 2px 0 0; height: auto; margin: 0; }
.grid i { border-left: 2px solid var(--orange); }
.grid i:first-child { border-color: red; margin-top: 2px; }
.clock i { border-left: 2px solid #000; border-bottom: 2px solid #000; }
.clock i:nth-child(even) { border-bottom: 0; border-top: 2px solid #000; }
.clock i:first-child { border-left: 0; background: linear-gradient(cyan, cyan) 0 100% / 2px 12px no-repeat; }
.bus b {
  grid-column: span 2;
  padding-left: 3px;
  font-weight: normal;
  line-height: 27px;
  white-space: nowrap;
  --ink: linear-gradient(#000, #000);
  --mid: linear-gradient(#000, #000);
  background:
    var(--ink) 2px 0 / 100% 2px no-repeat,
    var(--ink) 2px 100% / 100% 2px no-repeat,
    var(--ink) 2px 0 / 2px 6px no-repeat,
    var(--ink) 2px 100% / 2px 6px no-repeat,
    var(--ink) 100% 0 / 2px 6px no-repeat,
    var(--ink) 100% 100% / 2px 6px no-repeat,
    var(--mid) 0 6px / 2px 14px no-repeat;
}
.bus b:first-child { grid-column: span 1; --mid: linear-gradient(cyan, cyan); }
.bus b.whole { grid-column: 1 / -1; }
.bus b:last-child {
  background:
    var(--ink) 2px 0 / 100% 2px no-repeat,
    var(--ink) 2px 100% / 100% 2px no-repeat,
    var(--ink) 2px 0 / 2px 6px no-repeat,
    var(--ink) 2px 100% / 2px 6px no-repeat,
    var(--mid) 0 6px / 2px 14px no-repeat;
}

.side { flex: 0 0 31px; padding-left: 2px; display: flex; flex-direction: column; border-left: 2px solid var(--face); }
.corner { height: 38px; background: var(--panel); border-bottom: 2px solid var(--shade); box-shadow: 0 2px var(--face); }
.scroll { flex: 1; margin-top: 4px; padding-left: 2px; display: flex; flex-direction: column; border: 0 solid var(--shade); border-width: 2px 0 0 2px; }
.up { height: 28px; margin: 4px 0 4px 2px; padding-right: 2px; display: grid; place-items: center; background: var(--face); border-bottom: 4px solid #919191; box-shadow: 0 2px #c4c4c4; }
.up svg { width: 12px; height: 6px; }
.trough { height: 116px; background: var(--face); }
.thumb { height: 38px; background: #fff; }
.rest { flex: 1; }
```
